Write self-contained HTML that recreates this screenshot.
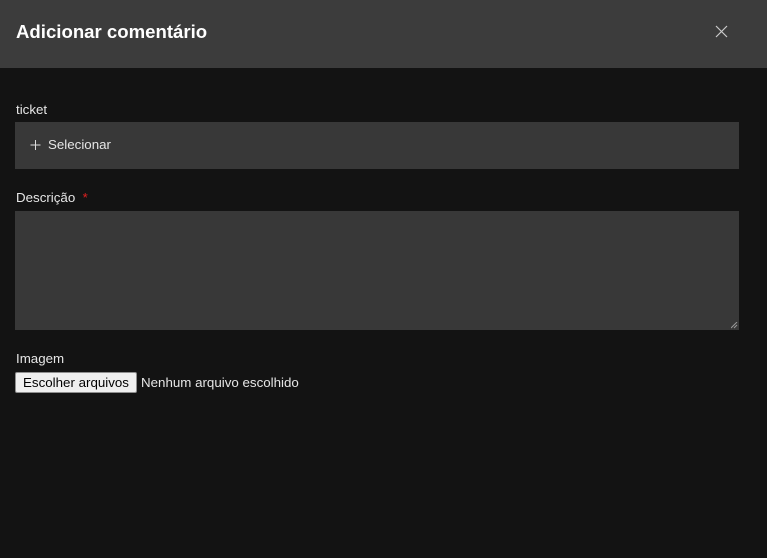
<!DOCTYPE html>
<html><head><style>
body{margin:0;width:767px;height:558px;background:#131313;font-family:"Liberation Sans",sans-serif;color:#e6e6e6;position:relative;overflow:hidden}
.hd{position:absolute;left:0;top:0;width:767px;height:68px;background:#3c3c3c}
.hd h1{position:absolute;left:16px;top:21px;margin:0;font-size:18.6px;font-weight:bold;color:#fff}
.lbl{position:absolute;left:16px;font-size:13.33px;color:#e6e6e6}
.box{position:absolute;left:15px;width:724px;background:#383838}
.btn{position:absolute;left:15px;top:372px;width:120px;height:19px;background:#efefef;border:1px solid #8f8f8f;border-radius:2px;color:#000;font-size:13.33px;line-height:19px;text-align:center}
</style></head><body>
<div class="hd"><h1>Adicionar comentário</h1>
<svg style="position:absolute;left:715px;top:25px" width="13" height="13" viewBox="0 0 13 13"><path d="M1 1L12 12M12 1L1 12" stroke="#ccc" stroke-width="1.2"/></svg></div>
<div class="lbl" style="top:102px">ticket</div>
<div class="box" style="top:122px;height:47px">
<svg style="position:absolute;left:15px;top:17px" width="11" height="11"><path d="M5.5 1V11M0.5 6H10.5" stroke="#ddd" stroke-width="1"/></svg>
<span style="position:absolute;left:33px;top:15px;font-size:13.33px;color:#e6e6e6">Selecionar</span></div>
<div class="lbl" style="top:190px">Descrição <span style="color:#e02020">&nbsp;*</span></div>
<div class="box" style="top:211px;height:119px">
<svg style="position:absolute;right:1px;bottom:1px" width="7" height="7"><path d="M6 0L0 6M6 3L3 6" stroke="#999"/></svg></div>
<div class="lbl" style="top:351px">Imagem</div>
<div class="btn">Escolher arquivos</div>
<div class="lbl" style="left:141px;top:375px">Nenhum arquivo escolhido</div>
</body></html>
